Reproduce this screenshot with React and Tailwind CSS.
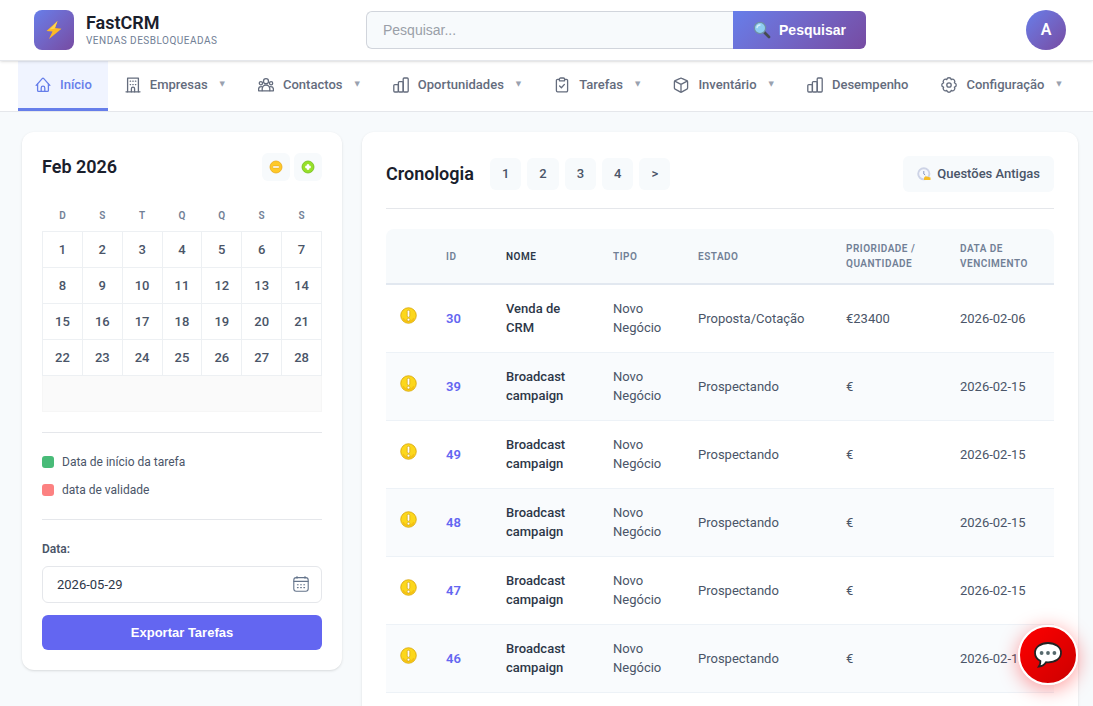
import React, { useState } from 'react';

const NAV_ITEMS = [
  { label: 'Início', icon: 'home', active: true },
  { label: 'Empresas', icon: 'building', menu: true },
  { label: 'Contactos', icon: 'users', menu: true },
  { label: 'Oportunidades', icon: 'chart', menu: true },
  { label: 'Tarefas', icon: 'clipboard', menu: true },
  { label: 'Inventário', icon: 'cube', menu: true },
  { label: 'Desempenho', icon: 'chart' },
  { label: 'Configuração', icon: 'cog', menu: true }
];

const WEEK_DAYS = ['D', 'S', 'T', 'Q', 'Q', 'S', 'S'];
const WEEKS = [0, 1, 2, 3].map((w) => WEEK_DAYS.map((_, d) => w * 7 + d + 1));

const DEALS = [
  { id: 30, name: 'Venda de CRM', status: 'Proposta/Cotação', amount: '€23400', due: '2026-02-06' },
  { id: 39, name: 'Broadcast campaign', status: 'Prospectando', amount: '€', due: '2026-02-15' },
  { id: 49, name: 'Broadcast campaign', status: 'Prospectando', amount: '€', due: '2026-02-15' },
  { id: 48, name: 'Broadcast campaign', status: 'Prospectando', amount: '€', due: '2026-02-15' },
  { id: 47, name: 'Broadcast campaign', status: 'Prospectando', amount: '€', due: '2026-02-15' },
  { id: 46, name: 'Broadcast campaign', status: 'Prospectando', amount: '€', due: '2026-02-15' }
];

const NAV_ICONS = {
  home: (
    <>
      <path d="M1.2 8.4 7.2 1.6q.8-.8 1.6 0l6 6.8" />
      <path d="M2.6 7v6.4q0 1 1 1h8.8q1 0 1-1V7" />
      <path d="M6.2 14.2V11a1.8 1.8 0 0 1 3.6 0v3.2" />
    </>
  ),
  building: (
    <>
      <path d="M1 14.8h14" />
      <path d="M2.6 14.8V1.2h10.8v13.6" />
      <path d="M6.4 14.8v-3a1.6 1.6 0 0 1 3.2 0v3" />
      <path d="M5.2 4.2h.4M7.8 4.2h.4M10.4 4.2h.4M5.2 7.6h.4M7.8 7.6h.4M10.4 7.6h.4" />
    </>
  ),
  users: (
    <>
      <circle cx="8" cy="4.2" r="2.5" />
      <circle cx="2.9" cy="6.2" r="1.6" />
      <circle cx="13.1" cy="6.2" r="1.6" />
      <path d="M4.2 13.8v-2a3.8 3.8 0 0 1 7.6 0v2z" />
      <path d="M4 13.8H.6v-1.6c0-1.6 1-2.6 2.6-2.6.6 0 1 .1 1.5.4M12 13.8h3.4v-1.6c0-1.6-1-2.6-2.6-2.6-.6 0-1 .1-1.5.4" />
    </>
  ),
  chart: (
    <>
      <rect x=".8" y="7.6" width="4.6" height="7.4" rx="1" />
      <rect x="5.4" y="4.6" width="4.8" height="10.4" rx="1" />
      <rect x="10.2" y="1" width="5" height="14" rx="1" />
    </>
  ),
  clipboard: (
    <>
      <path d="M5.4 2.4H3.6a1.2 1.2 0 0 0-1.2 1.2v10a1.2 1.2 0 0 0 1.2 1.2h8.8a1.2 1.2 0 0 0 1.2-1.2v-10a1.2 1.2 0 0 0-1.2-1.2h-1.8" />
      <path d="M5.4 3.8V2.2c0-.7.5-1.2 1.2-1.2h2.8c.7 0 1.2.5 1.2 1.2v1.6z" />
      <path d="m5.6 9 1.8 1.8 3-3.4" />
    </>
  ),
  cube: (
    <>
      <path d="M7.2 1.3q.8-.4 1.6 0l5 2.3q.8.4.8 1.2v6.2q0 .8-.7 1.2l-5 2.6q-.9.4-1.8 0l-5-2.6q-.7-.4-.7-1.2V4.8q0-.8.8-1.2z" />
      <path d="M1.8 4.2 8 7.4l6.2-3.2M8 7.4V15" />
    </>
  ),
  cog: (
    <>
      <path d="M13.36 10.22a2.25 2.25 0 0 1-3.14 3.14 2.25 2.25 0 0 1-4.44 0 2.25 2.25 0 0 1-3.14-3.14 2.25 2.25 0 0 1 0-4.44 2.25 2.25 0 0 1 3.14-3.14 2.25 2.25 0 0 1 4.44 0 2.25 2.25 0 0 1 3.14 3.14 2.25 2.25 0 0 1 0 4.44z" />
      <circle cx="8" cy="8" r="2.2" />
    </>
  )
};

function NavIcon({ name }) {
  return (
    <svg
      viewBox="0 0 16 16"
      className="size-4 shrink-0"
      fill="none"
      stroke="currentColor"
      strokeWidth="1.3"
      strokeLinecap="round"
      strokeLinejoin="round"
      aria-hidden="true"
    >
      {NAV_ICONS[name]}
    </svg>
  );
}

function WarningCoin() {
  return (
    <svg viewBox="0 0 16 16" className="size-[17px] -translate-y-[3px]" aria-hidden="true">
      <circle cx="8" cy="8" r="7.3" fill="#fcd71c" stroke="#d9a60c" strokeWidth=".8" />
      <path d="M2.8 10.5a5.8 5.8 0 0 0 10.4 0" fill="none" stroke="#f5c013" strokeWidth="1.4" />
      <rect x="6.8" y="3" width="2.4" height="6.6" rx="1.2" fill="#fff" stroke="#c99a12" strokeWidth=".6" />
      <circle cx="8" cy="11.9" r="1.3" fill="#fff" stroke="#c99a12" strokeWidth=".6" />
    </svg>
  );
}

function Header() {
  return (
    <header className="relative z-10 bg-white border-b border-gray-200 shadow-sm">
      <div className="h-15 pl-[34px] pr-[27px] flex items-center justify-between">
        <a href="#inicio" className="w-[332px] flex items-center gap-3">
          <span className="size-10 rounded-lg bg-linear-135 from-[#667eea] to-[#764ba2] flex items-center justify-center">
            <svg viewBox="0 0 20 20" className="size-5" aria-hidden="true">
              <path d="M13.5 1 2.5 11l6 .6L5 19 17.5 8.8l-6.3-.8z" fill="#fdb924" />
              <path d="m13.5 1-8 8.6 5-.8z" fill="#ffd54f" />
            </svg>
          </span>
          <span className="flex flex-col">
            <span className="text-lg leading-[22px] font-semibold text-[#1a202c]">FastCRM</span>
            <span className="text-[10px] leading-[14px] tracking-[0.5px] text-[#718096]">VENDAS DESBLOQUEADAS</span>
          </span>
        </a>

        <form className="w-[500px] h-[38px] flex" onSubmit={(e) => e.preventDefault()}>
          <input
            type="search"
            aria-label="Pesquisar"
            placeholder="Pesquisar..."
            className="flex-1 min-w-0 px-4 font-['Liberation_Sans',sans-serif] text-sm bg-[#f7fafc] border border-r-0 border-gray-300 rounded-l-md outline-none placeholder:text-[#9a9fa8]"
          />
          <button
            type="submit"
            className="w-[133px] flex items-center justify-center gap-2 rounded-r-md bg-linear-135 from-[#667eea] to-[#764ba2] text-white text-sm font-bold font-['Liberation_Sans',sans-serif]"
          >
            <svg viewBox="0 0 18 18" className="size-[18px]" aria-hidden="true">
              <path d="m11 11 5 5" stroke="#454c52" strokeWidth="2.8" strokeLinecap="round" />
              <circle cx="7" cy="7" r="5.6" fill="#8fcdf2" stroke="#6f8fa5" strokeWidth="1.2" />
              <path d="M4 6.5A3.2 3.2 0 0 1 7 4" stroke="#d7effc" strokeWidth="1.4" fill="none" strokeLinecap="round" />
            </svg>
            Pesquisar
          </button>
        </form>

        <div className="w-[200px] flex justify-end">
          <button className="size-10 rounded-full bg-linear-135 from-[#667eea] to-[#764ba2] text-white font-semibold">
            A
          </button>
        </div>
      </div>
    </header>
  );
}

function Nav() {
  return (
    <nav className="bg-white border-b border-gray-200 pl-[18px] flex">
      {NAV_ITEMS.map((item) => (
        <a
          key={item.label}
          href={`#${item.icon}`}
          className={`h-[50px] pl-[17px] pr-4 flex items-center gap-[9px] text-[13px] font-medium whitespace-nowrap border-b-3 ${
            item.active ? 'bg-[#f0f4ff] text-[#667eea] border-[#667eea]' : 'text-[#646c7d] border-transparent'
          }`}
        >
          <NavIcon name={item.icon} />
          {item.label}
          {item.menu && <span className="ml-[3px] text-[7px] text-gray-400 font-['DejaVu_Sans',sans-serif]">▼</span>}
        </a>
      ))}
    </nav>
  );
}

function Calendar() {
  return (
    <section>
      <div className="h-[29px] flex items-center justify-between">
        <h2 className="text-lg font-semibold text-[#1a202c]">Feb 2026</h2>
        <div className="flex gap-1">
          <button aria-label="Mês anterior" className="size-7 rounded-md bg-[#f7fafc] flex items-center justify-center">
            <svg viewBox="0 0 14 14" className="size-3.5">
              <circle cx="7" cy="7" r="6" fill="#ffc928" stroke="#e9a91b" strokeWidth=".8" />
              <rect x="3.6" y="5.9" width="6.8" height="2.2" rx="1" fill="#fff" stroke="#dba21d" strokeWidth=".5" />
            </svg>
          </button>
          <button aria-label="Mês seguinte" className="size-7 rounded-md bg-[#f7fafc] flex items-center justify-center">
            <svg viewBox="0 0 14 14" className="size-3.5">
              <circle cx="7" cy="7" r="6" fill="#97e029" stroke="#72bd1c" strokeWidth=".8" />
              <path d="M6 4.6h2V6h1.4v2H8v1.4H6V8H4.6V6H6z" fill="#fff" stroke="#fff" strokeWidth=".6" />
            </svg>
          </button>
        </div>
      </div>

      <table className="mt-[19px] w-full table-fixed border-collapse text-center">
        <thead>
          <tr>
            {WEEK_DAYS.map((day, i) => (
              <th key={i} className="h-[31px] text-[10px] font-semibold text-[#718096]">{day}</th>
            ))}
          </tr>
        </thead>
        <tbody>
          {WEEKS.map((week) => (
            <tr key={week[0]}>
              {week.map((day) => (
                <td key={day} className="h-9 pt-px border border-[#edf0f3] text-[13px] leading-[19px] font-medium text-[#4a5568]">{day}</td>
              ))}
            </tr>
          ))}
          <tr>
            <td colSpan={7} className="h-9 bg-[#fafafa] border border-[#f6f6f6]" />
          </tr>
        </tbody>
      </table>
    </section>
  );
}

function Sidebar() {
  const [date, setDate] = useState('2026-05-29');

  return (
    <aside className="w-80 shrink-0 bg-white rounded-xl shadow-sm p-5">
      <Calendar />

      <ul className="mt-5 py-[19px] border-y border-gray-200 flex flex-col gap-2 text-xs leading-5 text-[#4a5568]">
        <li className="flex items-center gap-2">
          <span className="size-3 rounded-[3px] bg-[#48bb78]" />
          Data de início da tarefa
        </li>
        <li className="flex items-center gap-2">
          <span className="size-3 rounded-[3px] bg-[#fc8181]" />
          data de validade
        </li>
      </ul>

      <form className="pt-5" onSubmit={(e) => e.preventDefault()}>
        <label htmlFor="export-date" className="block text-xs leading-[18px] font-semibold text-[#4a5568]">Data:</label>
        <div className="mt-2 h-[37px] pl-3.5 pr-3 flex items-center border border-gray-200 rounded-md">
          <input
            id="export-date"
            type="text"
            value={date}
            onChange={(e) => setDate(e.target.value)}
            className="flex-1 min-w-0 text-[13px] leading-[19px] text-[#2d3748] outline-none"
          />
          <svg viewBox="0 0 16 16" className="size-4" fill="none" stroke="#64748b" strokeWidth="1.1" strokeLinecap="round" aria-hidden="true">
            <rect x=".8" y="1.6" width="14.4" height="13.6" rx="2.4" />
            <path d="M1 5.4h14M4 .6v1.6M12 .6v1.6" />
            <path d="M4.4 8.8h.8M7.6 8.8h.8M10.8 8.8h.8M4.4 11.6h.8M7.6 11.6h.8M10.8 11.6h.8" />
          </svg>
        </div>
        <button
          type="submit"
          className="mt-3 w-full h-[35px] rounded-md bg-[#6366f1] text-white text-[13px] leading-[19px] font-bold font-['Liberation_Sans',sans-serif]"
        >
          Exportar Tarefas
        </button>
      </form>
    </aside>
  );
}

function Timeline() {
  return (
    <section className="flex-1 min-w-0 bg-white rounded-xl shadow-sm p-6">
      <div className="pb-4 flex items-center justify-between border-b border-gray-200">
        <div className="flex items-center gap-4">
          <h2 className="text-lg font-semibold text-[#1a202c]">Cronologia</h2>
          <div className="flex gap-[6px]">
            {['1', '2', '3', '4', '>'].map((page) => (
              <button key={page} className="h-8 px-3 rounded-md bg-[#f7fafc] text-[13px] font-medium text-[#4a5568]">
                {page}
              </button>
            ))}
          </div>
        </div>
        <button className="h-9 px-3.5 flex items-center gap-[6px] rounded-md bg-[#f7fafc] text-[13px] font-medium text-[#4a5568]">
          <svg viewBox="0 0 14 14" className="size-3.5" aria-hidden="true">
            <circle cx="6.8" cy="6.8" r="5.6" fill="#f5f7fc" stroke="#cdd3e6" strokeWidth="1.9" />
            <path d="M6.8 4v3l1.4 1" stroke="#8c9bc4" fill="none" />
            <path d="M7 13c-.4-2.8 1-4 2.6-3.6l3.9 1V13z" fill="#f6bd27" />
          </svg>
          Questões Antigas
        </button>
      </div>

      <table className="mt-5 w-full table-fixed text-left text-[13px] leading-[19px] text-[#4a5568]">
        <colgroup>
          <col className="w-[46px]" />
          <col className="w-[60px]" />
          <col className="w-[107px]" />
          <col className="w-[85px]" />
          <col className="w-[148px]" />
          <col className="w-[114px]" />
          <col className="w-[108px]" />
        </colgroup>
        <thead>
          <tr className="h-[55px] bg-[#f7fafc] border-b-2 border-[#e2e8f0] text-[10px] leading-[15px] tracking-[0.5px] text-[#718096] *:px-3.5 *:font-semibold">
            <th aria-label="Prioridade" className="rounded-tl-lg" />
            <th>ID</th>
            <th className="text-[#2d3748]">NOME</th>
            <th>TIPO</th>
            <th>ESTADO</th>
            <th>PRIORIDADE /<br />QUANTIDADE</th>
            <th className="rounded-tr-lg">DATA DE<br />VENCIMENTO</th>
          </tr>
        </thead>
        <tbody>
          {DEALS.map((deal) => (
            <tr key={deal.id} className="h-17 border-b border-[#edf2f7] even:bg-[#f9fbfd] *:px-3.5">
              <td><WarningCoin /></td>
              <td><a href={`#${deal.id}`} className="font-semibold text-[#6366f1]">{deal.id}</a></td>
              <td className="font-medium text-[#2d3748]">{deal.name}</td>
              <td>Novo Negócio</td>
              <td>{deal.status}</td>
              <td>{deal.amount}</td>
              <td>{deal.due}</td>
            </tr>
          ))}
        </tbody>
      </table>
    </section>
  );
}

export default function App() {
  return (
    <div className="h-screen overflow-hidden bg-[#f7fafc] font-['Roboto',sans-serif]">
      <Header />
      <Nav />
      <main className="pl-[22px] pr-[15px] pt-5 flex items-start gap-5">
        <Sidebar />
        <Timeline />
      </main>

      {/* Chat launcher */}
      <button
        aria-label="Chat"
        className="fixed right-[15px] bottom-[21px] z-20 size-[60px] rounded-full border-2 border-white bg-linear-135 from-[#ff0000] to-[#cc0000] shadow-[0_4px_20px_rgba(255,0,0,0.4)] flex items-center justify-center"
      >
        <svg viewBox="0 0 28 28" className="size-7" aria-hidden="true">
          <path d="M14 2C6.6 2 1 6 1 11.8c0 3.6 2 6.5 5.4 8.2.2 2-.3 3.7-1.6 5.6 3.4-.5 5.9-2.2 7.2-4.4l2 .1c7.4 0 13-3.7 13-9.5S21.4 2 14 2z" fill="#fff" stroke="#222" strokeWidth="1.8" />
          <circle cx="7.6" cy="12" r="1.9" fill="#56696d" />
          <circle cx="14" cy="12" r="1.9" fill="#56696d" />
          <circle cx="20.4" cy="12" r="1.9" fill="#56696d" />
        </svg>
      </button>
    </div>
  );
}
